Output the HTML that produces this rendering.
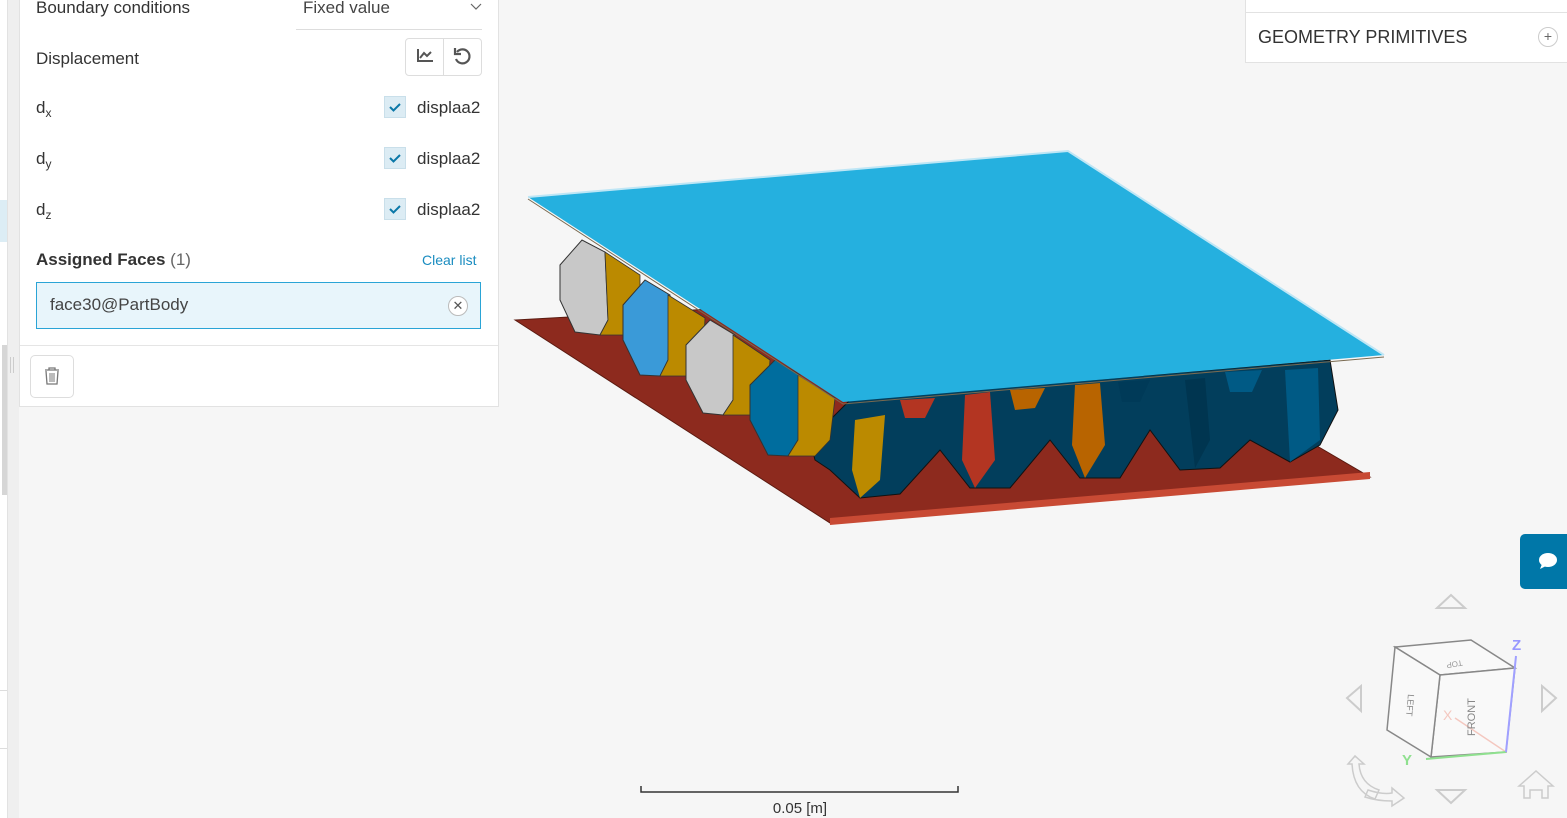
<!DOCTYPE html>
<html><head><meta charset="utf-8"><style>
*{margin:0;padding:0;box-sizing:border-box}
body{width:1567px;height:818px;overflow:hidden;background:#f6f6f6;font-family:"Liberation Sans",sans-serif;position:relative;color:#333}
.abs{position:absolute}
.panel{left:19px;top:-2px;width:480px;height:409px;background:#fff;border:1px solid #e2e2e2}
.t{position:absolute;font-size:17px;color:#333}
.cb{position:absolute;left:364px;width:22px;height:22px;background:#dcecf4;border:1px solid #c9dfea}
.cb svg{position:absolute;left:4px;top:5px}
sub{font-size:12px;vertical-align:-4px}
</style></head><body>
<div class="abs" style="left:0;top:0;width:8px;height:818px;background:#fff;border-right:1px solid #e2e2e2"></div>
<div class="abs" style="left:0;top:200px;width:7px;height:42px;background:#dcedf5"></div>
<div class="abs" style="left:2px;top:345px;width:5px;height:150px;background:#d6d6d6"></div>
<div class="abs" style="left:0;top:690px;width:7px;height:1px;background:#ddd"></div>
<div class="abs" style="left:0;top:748px;width:7px;height:1px;background:#ddd"></div>
<div class="abs" style="left:8px;top:0;width:11px;height:818px;background:#efefef"></div>
<div class="abs" style="left:10px;top:357px;width:1px;height:16px;background:#ccc"></div>
<div class="abs" style="left:13px;top:357px;width:1px;height:16px;background:#ccc"></div>

<div class="abs panel">
 <div class="t" style="left:16px;top:-1px">Boundary conditions</div>
 <div class="t" style="left:283px;top:-1px;color:#444">Fixed value</div>
 <svg class="abs" style="left:450px;top:4px" width="12" height="8"><path d="M1 1l5 5 5-5" fill="none" stroke="#666" stroke-width="1.2"/></svg>
 <div class="abs" style="left:276px;top:30px;width:186px;height:1px;background:#ddd"></div>
 <div class="t" style="left:16px;top:50px">Displacement</div>
 <div class="abs" style="left:385px;top:39px;width:77px;height:38px;border:1px solid #ddd;border-radius:4px"></div>
 <div class="abs" style="left:423px;top:39px;width:1px;height:38px;background:#ddd"></div>
 <svg class="abs" style="left:396px;top:49px" width="18" height="16"><path d="M2 1v12h15" fill="none" stroke="#555" stroke-width="2"/><path d="M4 10l4-5 3 3 4-4" fill="none" stroke="#555" stroke-width="2"/></svg>
 <svg class="abs" style="left:432px;top:47px" width="20" height="20"><path d="M5 6a7 7 0 1 1-1 7" fill="none" stroke="#555" stroke-width="2.2"/><path d="M3 2v6h6" fill="none" stroke="#555" stroke-width="2.2"/></svg>
 <div class="t" style="left:16px;top:99px">d<sub>x</sub></div>
 <div class="cb" style="top:97px"><svg width="12" height="10"><path d="M1 5l3.5 3.5L11 2" fill="none" stroke="#0b78a8" stroke-width="2"/></svg></div>
 <div class="t" style="left:397px;top:99px">displaa2</div>
 <div class="t" style="left:16px;top:150px">d<sub>y</sub></div>
 <div class="cb" style="top:148px"><svg width="12" height="10"><path d="M1 5l3.5 3.5L11 2" fill="none" stroke="#0b78a8" stroke-width="2"/></svg></div>
 <div class="t" style="left:397px;top:150px">displaa2</div>
 <div class="t" style="left:16px;top:201px">d<sub>z</sub></div>
 <div class="cb" style="top:199px"><svg width="12" height="10"><path d="M1 5l3.5 3.5L11 2" fill="none" stroke="#0b78a8" stroke-width="2"/></svg></div>
 <div class="t" style="left:397px;top:201px">displaa2</div>
 <div class="t" style="left:16px;top:251px;font-weight:bold;color:#333">Assigned Faces <span style="font-weight:normal;color:#666">(1)</span></div>
 <div class="t" style="left:402px;top:253px;font-size:14px;color:#1a8cc0">Clear list</div>
 <div class="abs" style="left:16px;top:283px;width:445px;height:47px;background:#e8f5fb;border:1.5px solid #2aa4d6"></div>
 <div class="t" style="left:30px;top:296px;color:#444">face30@PartBody</div>
 <div class="abs" style="left:428px;top:297px;width:20px;height:20px;border:1px solid #bbb;border-radius:50%;background:#fff;font-size:13px;text-align:center;line-height:17px;color:#555">✕</div>
 <div class="abs" style="left:0;top:346px;width:478px;height:1px;background:#e5e5e5"></div>
 <div class="abs" style="left:10px;top:356px;width:44px;height:43px;border:1px solid #ddd;border-radius:5px"></div>
 <svg class="abs" style="left:23px;top:367px" width="18" height="20"><path d="M2 4h14M6 4V2h6v2M3 5l1 13h10l1-13" fill="none" stroke="#777" stroke-width="1.3"/><path d="M7 7v9M9 7v9M11 7v9" stroke="#777" stroke-width="1"/></svg>
</div>

<div class="abs" style="left:1245px;top:-2px;width:330px;height:65px;background:#fff;border:1px solid #e2e2e2"></div>
<div class="abs" style="left:1246px;top:12px;width:330px;height:1px;background:#e2e2e2"></div>
<div class="abs" style="left:1258px;top:27px;font-size:18px;color:#333">GEOMETRY PRIMITIVES</div>
<div class="abs" style="left:1538px;top:27px;width:20px;height:20px;border:1px solid #ccc;border-radius:50%;text-align:center;font-size:14px;line-height:17px;color:#666">+</div>

<svg class="abs" style="left:0;top:0" width="1567" height="818">
 <polygon points="515,320 830,523 1370,477 1050,290" fill="#8d2a1e" stroke="#5a1a10" stroke-width="1"/>
 <polygon points="830,518 1370,472 1370,479 830,525" fill="#c84a34"/>
 <path d="M810,440 L850,400 L1330,360 L1338,410 L1320,445 L1290,462 L1250,440 L1220,468 L1180,470 L1150,430 L1120,478 L1080,478 L1050,440 L1010,488 L970,488 L940,450 L900,494 L860,498 L830,470 L815,460 Z" fill="#023e5c" stroke="#111" stroke-width="1"/>
 <polygon points="855,420 885,415 880,480 860,498 852,470" fill="#bb8a00"/>
 <polygon points="965,395 990,392 995,460 975,488 962,460" fill="#b33522"/>
 <polygon points="1075,385 1100,383 1105,445 1085,478 1072,445" fill="#b86400"/>
 <polygon points="1185,380 1205,378 1210,440 1195,468" fill="#003550"/>
 <polygon points="1285,370 1318,368 1320,440 1290,462" fill="#005a85"/>
 <polygon points="900,400 935,398 925,418 905,418" fill="#b33522"/>
 <polygon points="1010,390 1045,388 1035,408 1015,410" fill="#b86400"/>
 <polygon points="1118,382 1150,380 1140,402 1122,402" fill="#003a58"/>
 <polygon points="1225,372 1262,370 1252,392 1230,392" fill="#005a85"/>
 <polygon points="560,265 582,240 605,252 608,320 600,335 575,332 560,300" fill="#c8c8c8" stroke="#333" stroke-width="1"/>
 <polygon points="605,252 640,275 640,320 625,335 600,335 608,320" fill="#bb8a00" stroke="#333" stroke-width="0.8"/>
 <polygon points="623,305 645,280 670,295 668,360 660,376 640,375 623,340" fill="#3a9ad8" stroke="#333" stroke-width="1"/>
 <polygon points="668,295 705,318 703,360 688,376 660,376 668,360" fill="#bb8a00" stroke="#333" stroke-width="0.8"/>
 <polygon points="686,345 710,320 735,335 733,400 723,415 703,413 686,380" fill="#c8c8c8" stroke="#333" stroke-width="1"/>
 <polygon points="733,335 770,360 767,400 750,415 723,415 733,400" fill="#bb8a00" stroke="#333" stroke-width="0.8"/>
 <polygon points="750,385 775,360 800,375 798,440 788,456 768,455 750,420" fill="#006d9e" stroke="#333" stroke-width="1"/>
 <polygon points="798,375 835,398 830,440 815,456 788,456 798,440" fill="#bb8a00" stroke="#333" stroke-width="0.8"/>
 <polygon points="528,197 1068,151 1384,355 843,402" fill="#25b0df"/>
 <polyline points="528,197 1068,151 1384,355" fill="none" stroke="#bfe6f5" stroke-width="2"/>
 <polyline points="528,199 843,404 1384,357" fill="none" stroke="#7a6a50" stroke-width="1"/>
 <path d="M641,786v6h317v-6" fill="none" stroke="#333" stroke-width="1.5"/>
 <text x="800" y="813" font-size="15" text-anchor="middle" fill="#333" font-family="Liberation Sans">0.05 [m]</text>
 <g fill="none" stroke="#ccc" stroke-width="2">
  <polygon points="1437,608 1451,595 1465,608"/>
  <polygon points="1437,790 1451,803 1465,790"/>
  <polygon points="1361,686 1347,698 1361,711"/>
  <polygon points="1542,686 1556,698 1542,711"/>
  <path d="M1524,798v-12h-5l17-15 17 15h-5v12h-6v-8h-12v8z" stroke-width="1.5"/>
  <path d="M1348,764l7-8 9 8h-5c1,14 8,22 20,26l-4,9c-15-5-22-17-23-35z" stroke-width="1.5"/>
  <path d="M1368,790c9,3 18,4 24,3v-5l12,10-12,8v-5c-10,0-18-1-27-4z" stroke-width="1.5"/>
 </g>
 <g stroke="#888" stroke-width="1.5" fill="#f9f9f9">
  <polygon points="1395,647 1471,640 1515,668 1440,675"/>
  <polygon points="1440,675 1515,668 1506,752 1431,757"/>
  <polygon points="1395,647 1440,675 1431,757 1387,730"/>
 </g>
 <line x1="1506" y1="752" x2="1455" y2="718" stroke="#f4c8c0" stroke-width="1.5"/>
 <line x1="1506" y1="752" x2="1426" y2="759" stroke="#8fe08f" stroke-width="2"/>
 <line x1="1506" y1="752" x2="1516" y2="656" stroke="#a0a0ff" stroke-width="2"/>
 <text x="1512" y="650" font-size="15" font-weight="bold" fill="#9898ff" font-family="Liberation Sans">Z</text>
 <text x="1402" y="765" font-size="15" font-weight="bold" fill="#8fe08f" font-family="Liberation Sans">Y</text>
 <text x="1443" y="720" font-size="14" fill="#f4c8c0" font-family="Liberation Sans">X</text>
 <text x="0" y="0" font-size="11" fill="#888" transform="translate(1475,736) rotate(-90)" font-family="Liberation Sans">FRONT</text>
 <text x="0" y="0" font-size="9" fill="#888" transform="translate(1408,694) rotate(95)" font-family="Liberation Sans">LEFT</text>
 <text x="0" y="0" font-size="8" fill="#999" transform="translate(1462,660) rotate(170)" font-family="Liberation Sans">TOP</text>
</svg>
<div class="abs" style="left:1520px;top:534px;width:50px;height:55px;background:#0077a8;border-radius:5px 0 0 5px"></div>
<svg class="abs" style="left:1537px;top:551px" width="22" height="20"><ellipse cx="11" cy="9" rx="9" ry="7" fill="#fff"/><path d="M5 13l-2 5 6-3z" fill="#fff"/></svg>
</body></html>
